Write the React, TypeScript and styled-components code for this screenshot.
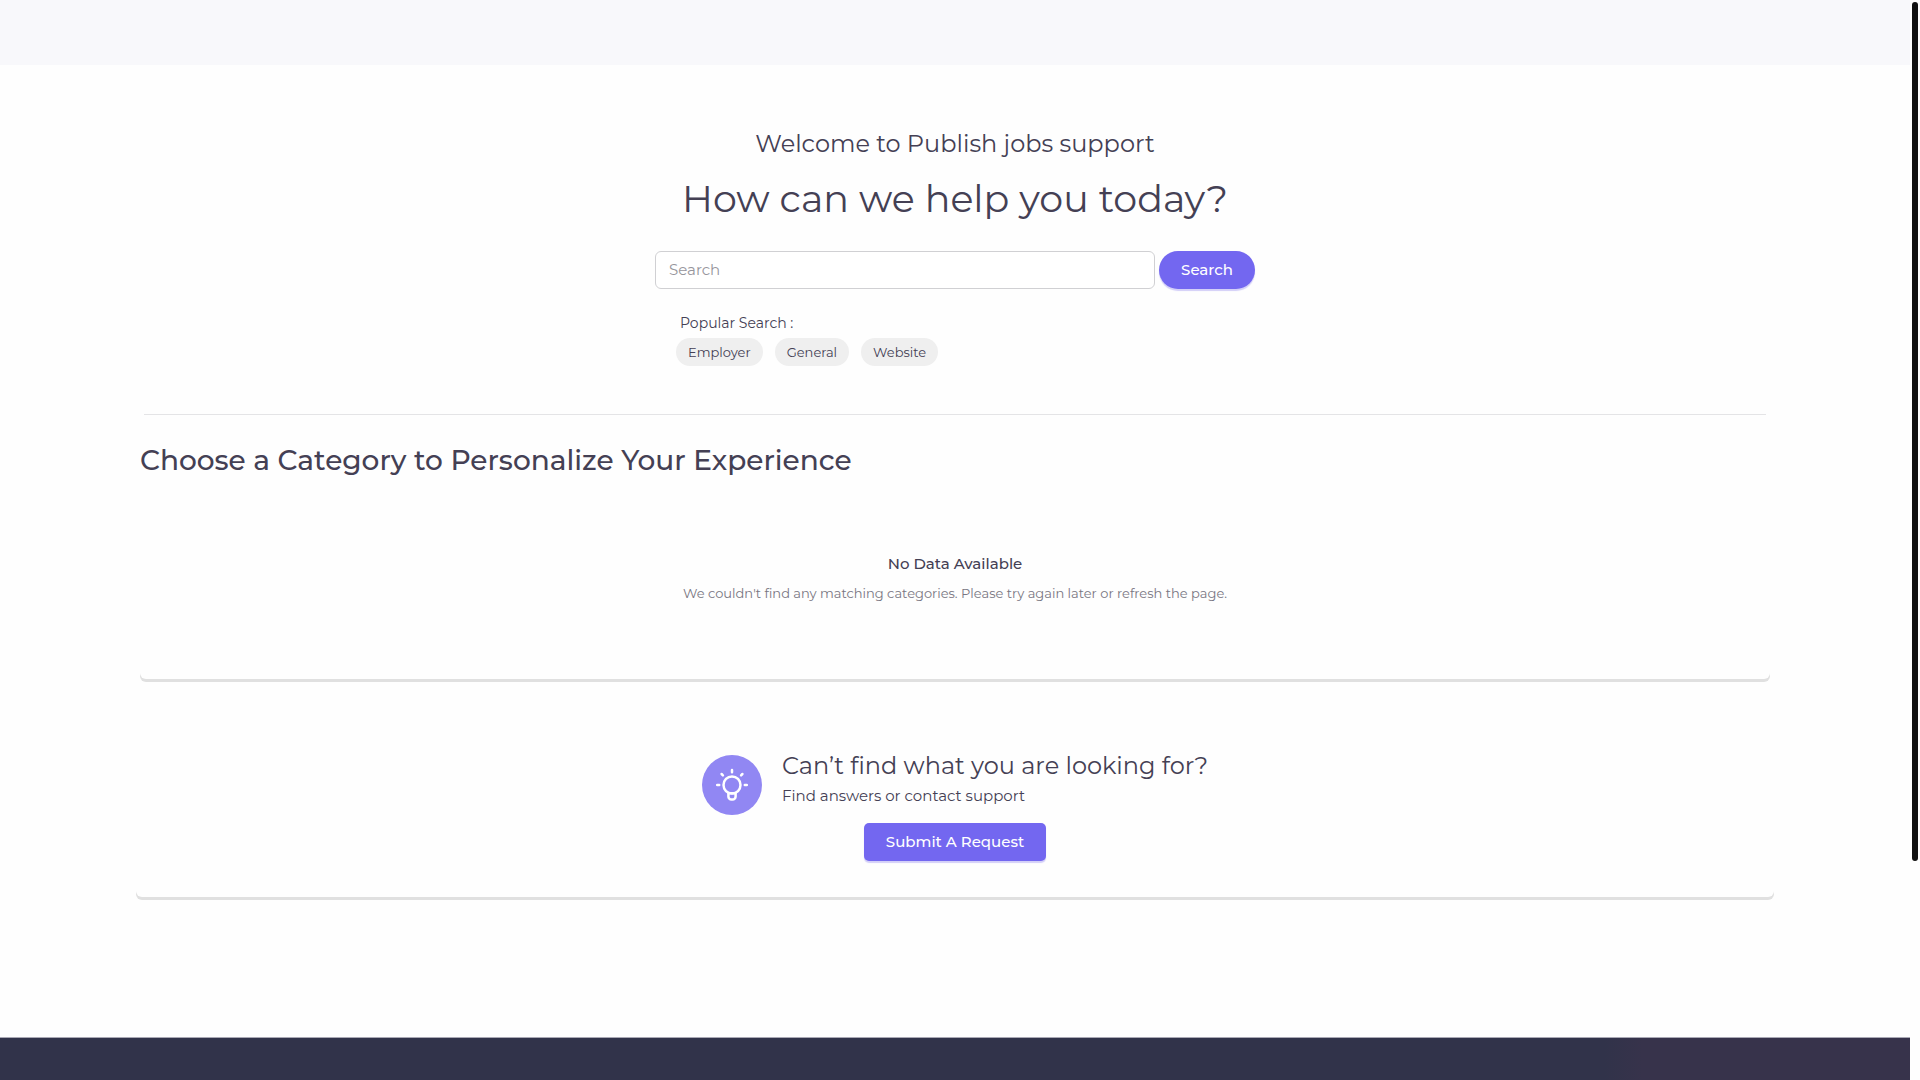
import React from 'react';
import styled, { createGlobalStyle } from 'styled-components';

const GlobalStyle = createGlobalStyle`
  *, *::before, *::after { box-sizing: border-box; }
  html, body { margin: 0; background: #fefefe; }
  body, button, input {
    font-family: Montserrat, Inter, 'Open Sans', sans-serif;
    color: #444054;
  }
`;

const Page = styled.div`
  display: flex;
  flex-direction: column;
  min-height: 100vh;
  padding-right: 10px;
`;

const TopBand = styled.header`
  height: 65px;
  background: #f8f8fb;
`;

const Main = styled.main`
  padding: 64px 136px 140px;
`;

const Hero = styled.section`
  display: flex;
  flex-direction: column;
  align-items: center;
  padding-bottom: 48px;
`;

const Lead = styled.p`
  margin: 0;
  font-size: 24px;
  line-height: 30px;
  font-weight: 400;
`;

const Title = styled.h1`
  margin: 16px 0 28px;
  font-size: 38px;
  line-height: 48px;
  font-weight: 400;
`;

const SearchArea = styled.div`
  width: 600px;
`;

const SearchForm = styled.form`
  display: flex;
  gap: 4px;
`;

const SearchInput = styled.input`
  flex: 1;
  min-width: 0;
  height: 38px;
  padding: 0 13px 2px;
  border: 1px solid #d0d0d3;
  border-radius: 6px;
  background: #fff;
  font-size: 15px;
  outline: none;
  &::placeholder { color: #96959c; opacity: 1; }
`;

const PrimaryButton = styled.button<{ $pill?: boolean }>`
  height: 38px;
  padding: 0 22px 2px;
  border: 0;
  border-radius: ${({ $pill }) => ($pill ? 19 : 5)}px;
  background: #7367f0;
  color: #fff;
  font-size: 15px;
  font-weight: 500;
  box-shadow: 0 2px 1px #d3cff8;
  cursor: pointer;
`;

const Popular = styled.div`
  padding: 24px 21px 0;
`;

const PopularLabel = styled.p`
  margin: 0 0 5px 4px;
  font-size: 14px;
  line-height: 20px;
`;

const ChipList = styled.div`
  display: flex;
  gap: 12px;
`;

const Chip = styled.button`
  height: 28px;
  padding: 0 12px;
  border: 0;
  border-radius: 14px;
  background: #efefef;
  font-size: 13px;
  cursor: pointer;
`;

const Divider = styled.hr`
  margin: 0 8px;
  border: 0;
  border-top: 1px solid #e4e4e6;
`;

const Card = styled.section<{ $inset?: boolean }>`
  margin: 0 ${({ $inset }) => ($inset ? 4 : 0)}px;
  border-radius: 6px;
  box-shadow: 0 3px 0 #e0e0e0;
`;

const CategoryTitle = styled.h2`
  margin: 0;
  padding-top: 25px;
  font-size: 28px;
  line-height: 40px;
  font-weight: 500;
`;

const EmptyState = styled.div`
  padding: 74px 0 76px;
  text-align: center;
`;

const EmptyTitle = styled.h3`
  margin: 0 0 9px;
  font-size: 15px;
  line-height: 20px;
  font-weight: 500;
`;

const EmptyText = styled.p`
  margin: 0;
  font-size: 13px;
  line-height: 20px;
  color: #797682;
`;

const Contact = styled.div`
  display: flex;
  flex-direction: column;
  align-items: center;
  gap: 8px;
  padding: 72px 0 36px;
`;

const ContactRow = styled.div`
  display: flex;
  align-items: flex-start;
  gap: 20px;
`;

const Badge = styled.span`
  display: flex;
  align-items: center;
  justify-content: center;
  width: 60px;
  height: 60px;
  margin-top: 4px;
  border-radius: 50%;
  background: #9187f3;
`;

const ContactHint = styled.p`
  margin: 5px 0 0;
  font-size: 15px;
  line-height: 20px;
`;

const Footer = styled.footer`
  flex: 1;
  min-height: 43px;
  background: linear-gradient(90deg, #31334a 0, #31334a 84%, #37334b 86%);
  border-top: 1px solid #aaa9b5;
`;

const ScrollThumb = styled.div`
  position: fixed;
  top: 2px;
  right: 2px;
  width: 6px;
  height: 79.5vh;
  border-radius: 3px;
  background: #111;
`;

const BulbIcon = () => (
  <svg width="34" height="34" viewBox="0 0 34 34" fill="none" stroke="#fff" strokeWidth="2.5" strokeLinecap="round" strokeLinejoin="round" aria-hidden="true">
    <circle cx="17" cy="17" r="8.500" />
    <path d="M13.400 25.200h7.200v3.400a3 3 0 0 1-3 3h-1.200a3 3 0 0 1-3-3z" />
    <path d="M17 2v2.200M6.600 6l1.300 1.300M27.400 6l-1.300 1.300M2.200 17h2M29.800 17h2" />
  </svg>
);

const chips = ['Employer', 'General', 'Website'];

export default function App() {
  return (
    <>
      <GlobalStyle />
      <Page>
        <TopBand />
        <Main>
          <Hero>
            <Lead>Welcome to Publish jobs support</Lead>
            <Title>How can we help you today?</Title>
            <SearchArea>
              <SearchForm onSubmit={(e) => e.preventDefault()}>
                <SearchInput type="text" placeholder="Search" aria-label="Search" />
                <PrimaryButton $pill type="submit">Search</PrimaryButton>
              </SearchForm>
              <Popular>
                <PopularLabel>Popular Search :</PopularLabel>
                <ChipList>
                  {chips.map((c) => (
                    <Chip key={c} type="button">{c}</Chip>
                  ))}
                </ChipList>
              </Popular>
            </SearchArea>
          </Hero>
          <Divider />
          <Card $inset>
            <CategoryTitle>Choose a Category to Personalize Your Experience</CategoryTitle>
            <EmptyState>
              <EmptyTitle>No Data Available</EmptyTitle>
              <EmptyText>
                We couldn't find any matching categories. Please try again later or refresh the page.
              </EmptyText>
            </EmptyState>
          </Card>
          <Card>
            <Contact>
              <ContactRow>
                <Badge><BulbIcon /></Badge>
                <div>
                  <Lead>Can’t find what you are looking for?</Lead>
                  <ContactHint>Find answers or contact support</ContactHint>
                </div>
              </ContactRow>
              <PrimaryButton type="button">Submit A Request</PrimaryButton>
            </Contact>
          </Card>
        </Main>
        <Footer />
      </Page>
      <ScrollThumb />
    </>
  );
}
